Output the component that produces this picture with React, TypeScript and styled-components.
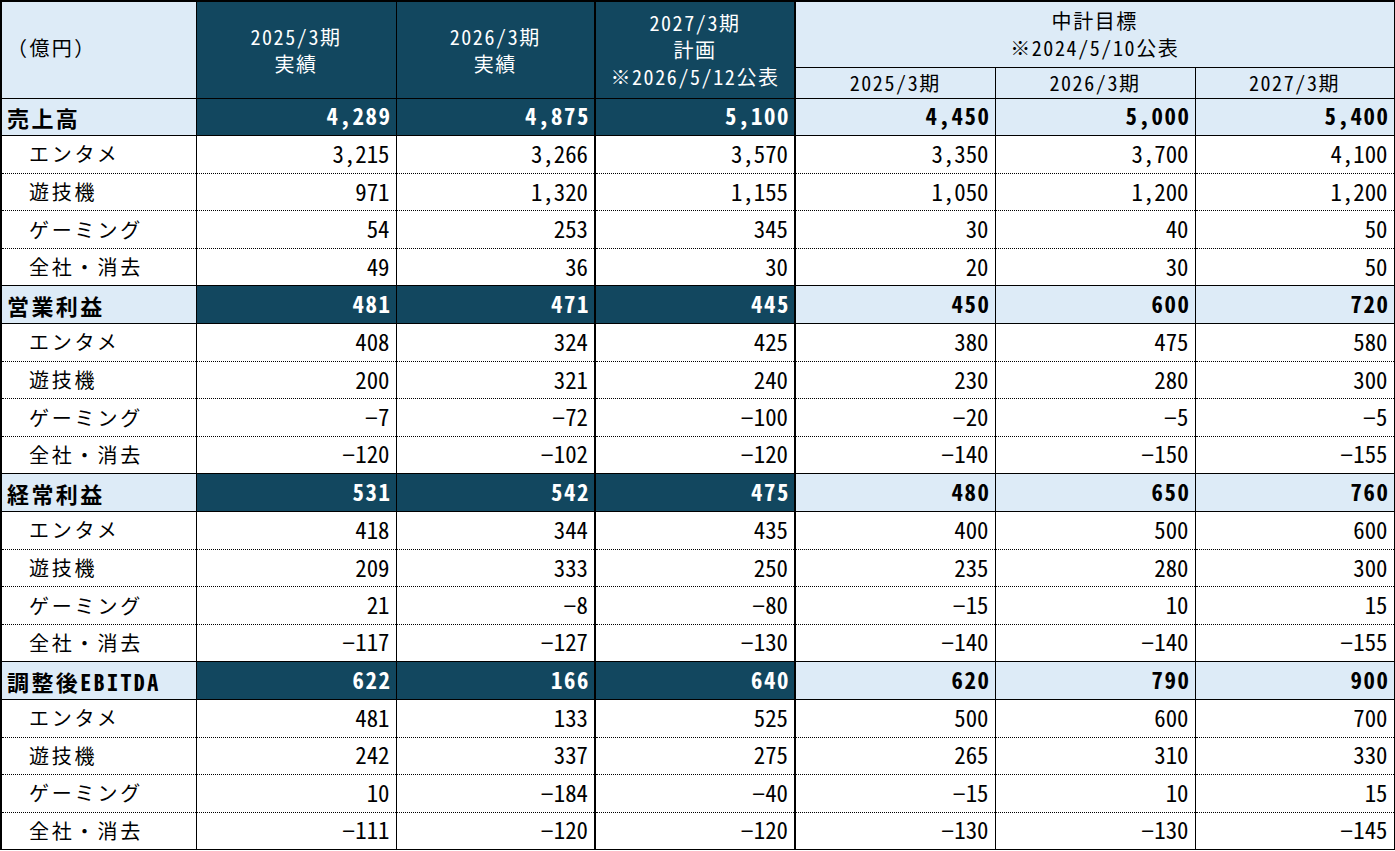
import React, { ReactElement } from 'react'
import styled, { createGlobalStyle, css } from 'styled-components'

type Tone = 'dark' | 'light' | 'plain'

interface SubRow {
  label: string
  values: number[]
}

interface Section {
  title: string
  totals: number[]
  rows: SubRow[]
}

const DARK = '#12475f'
const LIGHT = '#ddebf7'
const LINE = '#000'

// index of the "計画" column among the value columns
const PLAN_INDEX = 2

const SEGMENTS = ['エンタメ', '遊技機', 'ゲーミング', '全社・消去']

const makeRows = (values: number[][]): SubRow[] =>
  values.map((v, i) => ({ label: SEGMENTS[i], values: v }))

const SECTIONS: Section[] = [
  {
    title: '売上高',
    totals: [4289, 4875, 5100, 4450, 5000, 5400],
    rows: makeRows([
      [3215, 3266, 3570, 3350, 3700, 4100],
      [971, 1320, 1155, 1050, 1200, 1200],
      [54, 253, 345, 30, 40, 50],
      [49, 36, 30, 20, 30, 50],
    ]),
  },
  {
    title: '営業利益',
    totals: [481, 471, 445, 450, 600, 720],
    rows: makeRows([
      [408, 324, 425, 380, 475, 580],
      [200, 321, 240, 230, 280, 300],
      [-7, -72, -100, -20, -5, -5],
      [-120, -102, -120, -140, -150, -155],
    ]),
  },
  {
    title: '経常利益',
    totals: [531, 542, 475, 480, 650, 760],
    rows: makeRows([
      [418, 344, 435, 400, 500, 600],
      [209, 333, 250, 235, 280, 300],
      [21, -8, -80, -15, 10, 15],
      [-117, -127, -130, -140, -140, -155],
    ]),
  },
  {
    title: '調整後EBITDA',
    totals: [622, 166, 640, 620, 790, 900],
    rows: makeRows([
      [481, 133, 525, 500, 600, 700],
      [242, 337, 275, 265, 310, 330],
      [10, -184, -40, -15, 10, 15],
      [-111, -120, -120, -130, -130, -145],
    ]),
  },
]

const toneFor = (index: number): Tone => (index <= PLAN_INDEX ? 'dark' : 'light')

const Amount = ({ value }: { value: number }): ReactElement => {
  const digits = Math.abs(value).toLocaleString('en-US')
  return (
    <>
      {value < 0 && <Minus>−</Minus>}
      {digits}
    </>
  )
}

const HeadLines = ({ lines }: { lines: string[] }): ReactElement => (
  <>
    {lines.map((line) => (
      <HeadLine key={line}>{line}</HeadLine>
    ))}
  </>
)

export default function App(): ReactElement {
  return (
    <>
      <GlobalStyle />
      <Sheet>
        <colgroup>
          <Col $width={195} />
          <Col $width={200} />
          <Col $width={199} />
          <Col $width={200} />
          <Col $width={200} />
          <Col $width={200} />
          <Col $width={199} />
        </colgroup>
        <thead>
          <HeadRow $height={66}>
            <CornerCell rowSpan={2}>（億円）</CornerCell>
            <HeadCell rowSpan={2} $tone="dark">
              <HeadLines lines={['2025/3期', '実績']} />
            </HeadCell>
            <HeadCell rowSpan={2} $tone="dark">
              <HeadLines lines={['2026/3期', '実績']} />
            </HeadCell>
            <HeadCell rowSpan={2} $tone="dark" $plan>
              <HeadLines lines={['2027/3期', '計画', '※2026/5/12公表']} />
            </HeadCell>
            <HeadCell colSpan={3} $tone="light">
              <HeadLines lines={['中計目標', '※2024/5/10公表']} />
            </HeadCell>
          </HeadRow>
          <HeadRow $height={31}>
            <HeadCell $tone="light">2025/3期</HeadCell>
            <HeadCell $tone="light">2026/3期</HeadCell>
            <HeadCell $tone="light">2027/3期</HeadCell>
          </HeadRow>
        </thead>
        <tbody>
          {SECTIONS.map((section) => (
            <React.Fragment key={section.title}>
              <BodyRow>
                <LabelCell $section>{section.title}</LabelCell>
                {section.totals.map((value, i) => (
                  <ValueCell key={i} $section $tone={toneFor(i)} $plan={i === PLAN_INDEX}>
                    <Amount value={value} />
                  </ValueCell>
                ))}
              </BodyRow>
              {section.rows.map((row) => (
                <BodyRow key={row.label}>
                  <LabelCell>{row.label}</LabelCell>
                  {row.values.map((value, i) => (
                    <ValueCell key={i} $tone="plain" $plan={i === PLAN_INDEX}>
                      <Amount value={value} />
                    </ValueCell>
                  ))}
                </BodyRow>
              ))}
            </React.Fragment>
          ))}
        </tbody>
      </Sheet>
    </>
  )
}

const GlobalStyle = createGlobalStyle`
  html, body {
    margin: 0;
    padding: 0;
    background: #fff;
  }

  body {
    font-family: "Noto Sans CJK JP", "Noto Sans", sans-serif;
    color: #000;
  }
`

const toneStyles = {
  dark: css`
    background: ${DARK};
    color: #fff;
  `,
  light: css`
    background: ${LIGHT};
    color: #000;
  `,
  plain: css`
    background: #fff;
    color: #000;
  `,
}

const Sheet = styled.table`
  width: 1393px;
  table-layout: fixed;
  border-collapse: collapse;
  border-top: 2px solid ${LINE};
  border-left: 2px solid ${LINE};
  border-right: 1px solid ${LINE};
  border-bottom: 1px solid ${LINE};
  font-feature-settings: 'hwid' 1;
`

const Col = styled.col<{ $width: number }>`
  width: ${(p) => p.$width}px;
`

const HeadRow = styled.tr<{ $height: number }>`
  height: ${(p) => p.$height}px;
`

const HeadCell = styled.th<{ $tone: Tone; $plan?: boolean }>`
  ${(p) => toneStyles[p.$tone]}
  padding: 0 4px;
  font-size: 20px;
  font-weight: 400;
  letter-spacing: 1.6px;
  line-height: 1;
  text-align: center;
  vertical-align: middle;
  white-space: nowrap;
  border: 1px solid ${LINE};
  ${(p) =>
    p.$plan &&
    css`
      border-left-width: 2px;
      border-right-width: 2px;
    `}
`

const HeadLine = styled.span`
  display: block;
  line-height: 27px;
`

const CornerCell = styled.th`
  ${toneStyles.light}
  padding: 0 0 4px 5px;
  font-size: 20px;
  font-weight: 400;
  letter-spacing: 2.4px;
  text-align: left;
  vertical-align: middle;
  white-space: nowrap;
  font-feature-settings: normal;
  border: 1px solid ${LINE};
`

const BodyRow = styled.tr`
  height: 37.6px;
`

const LabelCell = styled.td<{ $section?: boolean }>`
  padding: 0 0 0 ${(p) => (p.$section ? 5 : 27)}px;
  border-right: 1px solid ${LINE};
  border-bottom: 1px dotted ${LINE};
  white-space: nowrap;
  vertical-align: middle;
  line-height: 1;
  background: ${(p) => (p.$section ? LIGHT : '#fff')};
  font-size: ${(p) => (p.$section ? 22 : 20)}px;
  font-weight: ${(p) => (p.$section ? 700 : 400)};
  letter-spacing: ${(p) => (p.$section ? 2.4 : 2.8)}px;
  ${(p) =>
    p.$section &&
    css`
      border-top: 1px solid ${LINE};
      border-bottom: 1px solid ${LINE};
    `}
`

const ValueCell = styled.td<{ $tone: Tone; $section?: boolean; $plan?: boolean }>`
  ${(p) => toneStyles[p.$tone]}
  padding: 0 ${(p) => (p.$section ? 4 : 6)}px 0 0;
  text-align: right;
  vertical-align: middle;
  line-height: 1;
  white-space: nowrap;
  font-size: 22.8px;
  font-weight: ${(p) => (p.$section ? 700 : 400)};
  letter-spacing: ${(p) => (p.$section ? 1.6 : 0)}px;
  border-left: 1px solid ${LINE};
  border-right: 1px solid ${LINE};
  border-bottom: 1px dotted ${LINE};
  ${(p) =>
    p.$section &&
    css`
      border-top: 1px solid ${LINE};
      border-bottom: 1px solid ${LINE};
    `}
  ${(p) =>
    p.$plan &&
    css`
      border-left-width: 2px;
      border-right-width: 2px;
    `}
`

// the sheet's minus is a long bar, close to a half-width cell
const Minus = styled.span`
  font-family: "Liberation Sans", sans-serif;
  font-weight: 400;
`
